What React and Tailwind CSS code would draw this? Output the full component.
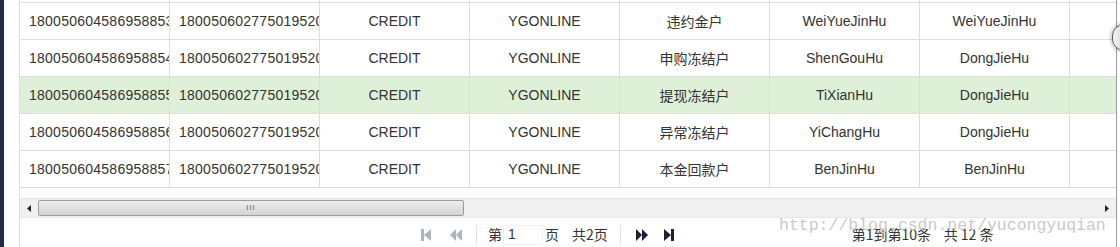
import React from "react"

const rows = [
  { id: "180050604586958853", acc: "180050602775019520", type: "CREDIT", ch: "YGONLINE", name: "违约金户", code: "WeiYueJinHu", group: "WeiYueJinHu" },
  { id: "180050604586958854", acc: "180050602775019520", type: "CREDIT", ch: "YGONLINE", name: "申购冻结户", code: "ShenGouHu", group: "DongJieHu" },
  { id: "180050604586958855", acc: "180050602775019520", type: "CREDIT", ch: "YGONLINE", name: "提现冻结户", code: "TiXianHu", group: "DongJieHu", active: true },
  { id: "180050604586958856", acc: "180050602775019520", type: "CREDIT", ch: "YGONLINE", name: "异常冻结户", code: "YiChangHu", group: "DongJieHu" },
  { id: "180050604586958857", acc: "180050602775019520", type: "CREDIT", ch: "YGONLINE", name: "本金回款户", code: "BenJinHu", group: "BenJinHu" },
]

const cell = "box-border w-[150px] shrink-0 border-r border-b border-[#dddddd] overflow-hidden whitespace-nowrap"
const cjk = { fontFamily: '"Noto Sans CJK SC", sans-serif' }

function Row({ r }) {
  const bg = r.active ? "bg-[#dff0d8]" : "bg-white"
  return (
    <div className={`flex h-[37px] ${bg}`}>
      <div className={`${cell} pl-[9px] leading-[36px] tracking-[0.25px]`}>{r.id}</div>
      <div className={`${cell} pl-[9px] leading-[36px] tracking-[0.25px]`}>{r.acc}</div>
      <div className={`${cell} text-center leading-[36px]`}>{r.type}</div>
      <div className={`${cell} text-center leading-[36px]`}>{r.ch}</div>
      <div className={`${cell} text-center leading-[36px]`} style={cjk}>{r.name}</div>
      <div className={`${cell} text-center leading-[36px]`}>{r.code}</div>
      <div className={`${cell} text-center leading-[36px]`}>{r.group}</div>
      <div className={`${cell} leading-[36px]`}></div>
    </div>
  )
}

function PagerIcon({ kind, color }) {
  const shapes = {
    first: (
      <>
        <rect x="0" y="0" width="3" height="12" fill={color} />
        <polygon points="10,0 10,12 3,6" fill={color} />
      </>
    ),
    prev: (
      <>
        <polygon points="7,0 7,12 1,6" fill={color} />
        <polygon points="13,0 13,12 7,6" fill={color} />
      </>
    ),
    next: (
      <>
        <polygon points="0,0 0,12 6,6" fill={color} />
        <polygon points="6,0 6,12 12,6" fill={color} />
      </>
    ),
    last: (
      <>
        <polygon points="0,0 0,12 7,6" fill={color} />
        <rect x="7" y="0" width="3" height="12" fill={color} />
      </>
    ),
  }
  return (
    <svg width="14" height="12" viewBox="0 0 14 12" className="block">
      {shapes[kind]}
    </svg>
  )
}

export default function App() {
  return (
    <div
      className="relative flex w-[1120px] h-[247px] overflow-hidden bg-white text-[14px] text-[#333333]"
      style={{ fontFamily: '"Liberation Sans", Arial, "Noto Sans CJK SC", sans-serif' }}
    >
      <div className="w-[4px] shrink-0 bg-[#242e40]" />
      <div className="w-[15px] shrink-0" />

      <div className="flex w-[1098px] shrink-0 flex-col border-l border-r border-l-[#dddddd] border-r-[#9a9a9a]">
        <div className="overflow-hidden">
          {/* tail of the previous row */}
          <div className="flex h-[3px]">
            {Array.from({ length: 8 }).map((_, i) => (
              <div key={i} className={`${cell} h-[3px]`} />
            ))}
          </div>
          {rows.map((r) => (
            <Row key={r.id} r={r} />
          ))}
        </div>

        <div className="h-[10px]" />

        {/* horizontal scrollbar */}
        <div className="flex h-[20px] items-center border-t border-b border-t-[#e2e2e2] border-b-[#e6e6e6] bg-[#f0f0f0]">
          <div className="flex w-[18px] justify-center">
            <svg width="4" height="7" viewBox="0 0 4 7">
              <polygon points="4,0 4,7 0,3.5" fill="#222" />
            </svg>
          </div>
          <div className="flex h-[16px] w-[426px] items-center justify-center rounded-[2px] border border-[#9c9c9c] bg-gradient-to-b from-[#eeeeee] to-[#d4d4d4]">
            <span className="text-[8px] leading-none tracking-[1px] text-[#666]">III</span>
          </div>
          <div className="flex-1" />
          <div className="flex w-[18px] justify-center">
            <svg width="4" height="7" viewBox="0 0 4 7">
              <polygon points="0,0 0,7 4,3.5" fill="#222" />
            </svg>
          </div>
        </div>

        {/* pager */}
        <div className="flex flex-1 items-center pl-[401px] pt-[4px]">
          <PagerIcon kind="first" color="#a9b6bd" />
          <div className="w-[14px]" />
          <PagerIcon kind="prev" color="#a9b6bd" />
          <div className="ml-[13px] h-[20px] w-px bg-[#e2e2e2]" />
          <span className="ml-[11px]" style={cjk}>第</span>
          <div className="ml-[1px] flex h-[20px] w-[40px] items-center border border-[#f0f0f0] pl-[4px]">1</div>
          <span className="ml-[2px]" style={cjk}>页</span>
          <span className="ml-[13px]" style={cjk}>共2页</span>
          <div className="ml-[12px] h-[20px] w-px bg-[#e2e2e2]" />
          <div className="ml-[15px]">
            <PagerIcon kind="next" color="#1b2433" />
          </div>
          <div className="ml-[14px]">
            <PagerIcon kind="last" color="#1b2433" />
          </div>
          <span className="ml-[174px]" style={cjk}>
            第1到第10条&nbsp;&nbsp;&nbsp;&nbsp;共 12 条
          </span>
        </div>
      </div>

      <div className="flex-1 bg-white" />

      {/* round handle peeking in at the right edge */}
      <div className="absolute left-[1112px] top-[24px] h-[27px] w-[24px] rounded-full border border-[#555] bg-gradient-to-r from-[#f4f4f4] to-[#bbbbbb] shadow-[0_0_4px_rgba(0,0,0,0.4)]" />

      {/* blog watermark */}
      <div
        className="absolute left-[779px] top-[216px] text-[16.5px] leading-[20px] text-[#c9c9c9]"
        style={{ fontFamily: '"Liberation Mono", "Courier New", monospace' }}
      >
        http://blog.csdn.net/yucongyuqian
      </div>
    </div>
  )
}
